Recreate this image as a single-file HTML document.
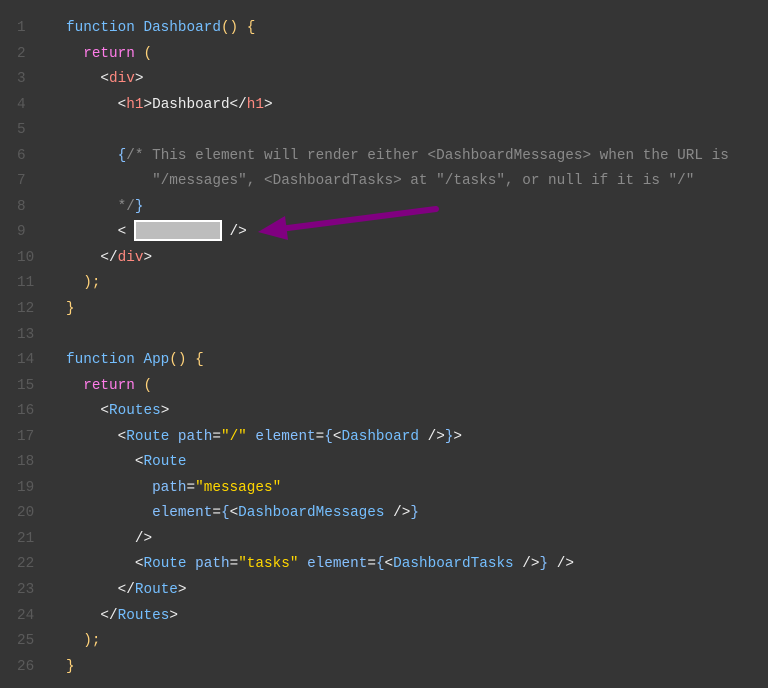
<html><head><style>
body{margin:0;background:#353535;width:768px;height:688px;overflow:hidden;font-family:"Liberation Mono",monospace;font-size:14.35px;}
.c{position:absolute;top:16px;left:0;}
.l{height:25.56px;line-height:25.56px;white-space:pre;color:#eee;position:relative}
.n{position:absolute;left:17px;color:#5a5a5a;}
.t{position:absolute;left:66px;}
.k{color:#ff7de9}.f{color:#75bfff}.p{color:#ffd27a}.g{color:#ff8a80}.s{color:#ffd700}.a{color:#86c1ff}.cm{color:#8a8a8a}.w{color:#eee}
</style></head><body>
<div class="c">
<div class="l"><span class="n">1</span><span class="t"><span class="f">function Dashboard</span><span class="p">() {</span></span></div>
<div class="l"><span class="n">2</span><span class="t">  <span class="k">return</span> <span class="p">(</span></span></div>
<div class="l"><span class="n">3</span><span class="t">    &lt;<span class="g">div</span>&gt;</span></div>
<div class="l"><span class="n">4</span><span class="t">      &lt;<span class="g">h1</span>&gt;Dashboard&lt;/<span class="g">h1</span>&gt;</span></div>
<div class="l"><span class="n">5</span></div>
<div class="l"><span class="n">6</span><span class="t">      <span class="a">{</span><span class="cm">/* This element will render either &lt;DashboardMessages&gt; when the URL is</span></span></div>
<div class="l"><span class="n">7</span><span class="t"><span class="cm">          "/messages", &lt;DashboardTasks&gt; at "/tasks", or null if it is "/"</span></span></div>
<div class="l"><span class="n">8</span><span class="t"><span class="cm">      */</span><span class="a">}</span></span></div>
<div class="l"><span class="n">9</span><span class="t">      &lt;            /&gt;</span></div>
<div class="l"><span class="n">10</span><span class="t">    &lt;/<span class="g">div</span>&gt;</span></div>
<div class="l"><span class="n">11</span><span class="t">  <span class="p">);</span></span></div>
<div class="l"><span class="n">12</span><span class="t"><span class="p">}</span></span></div>
<div class="l"><span class="n">13</span></div>
<div class="l"><span class="n">14</span><span class="t"><span class="f">function App</span><span class="p">() {</span></span></div>
<div class="l"><span class="n">15</span><span class="t">  <span class="k">return</span> <span class="p">(</span></span></div>
<div class="l"><span class="n">16</span><span class="t">    &lt;<span class="f">Routes</span>&gt;</span></div>
<div class="l"><span class="n">17</span><span class="t">      &lt;<span class="f">Route</span> <span class="a">path</span>=<span class="s">"/"</span> <span class="a">element</span>=<span class="a">{</span>&lt;<span class="f">Dashboard</span> /&gt;<span class="a">}</span>&gt;</span></div>
<div class="l"><span class="n">18</span><span class="t">        &lt;<span class="f">Route</span></span></div>
<div class="l"><span class="n">19</span><span class="t">          <span class="a">path</span>=<span class="s">"messages"</span></span></div>
<div class="l"><span class="n">20</span><span class="t">          <span class="a">element</span>=<span class="a">{</span>&lt;<span class="f">DashboardMessages</span> /&gt;<span class="a">}</span></span></div>
<div class="l"><span class="n">21</span><span class="t">        /&gt;</span></div>
<div class="l"><span class="n">22</span><span class="t">        &lt;<span class="f">Route</span> <span class="a">path</span>=<span class="s">"tasks"</span> <span class="a">element</span>=<span class="a">{</span>&lt;<span class="f">DashboardTasks</span> /&gt;<span class="a">}</span> /&gt;</span></div>
<div class="l"><span class="n">23</span><span class="t">      &lt;/<span class="f">Route</span>&gt;</span></div>
<div class="l"><span class="n">24</span><span class="t">    &lt;/<span class="f">Routes</span>&gt;</span></div>
<div class="l"><span class="n">25</span><span class="t">  <span class="p">);</span></span></div>
<div class="l"><span class="n">26</span><span class="t"><span class="p">}</span></span></div>
</div>
<div style="position:absolute;left:134px;top:220px;width:84px;height:17px;background:#bdbdbd;border:2px solid #fff"></div>
<svg width="768" height="688" style="position:absolute;left:0;top:0">
<line x1="436" y1="209" x2="280" y2="229" stroke="#800080" stroke-width="6" stroke-linecap="round"/>
<polygon points="258,232 285,216 288,240" fill="#800080"/>
</svg>
</body></html>
